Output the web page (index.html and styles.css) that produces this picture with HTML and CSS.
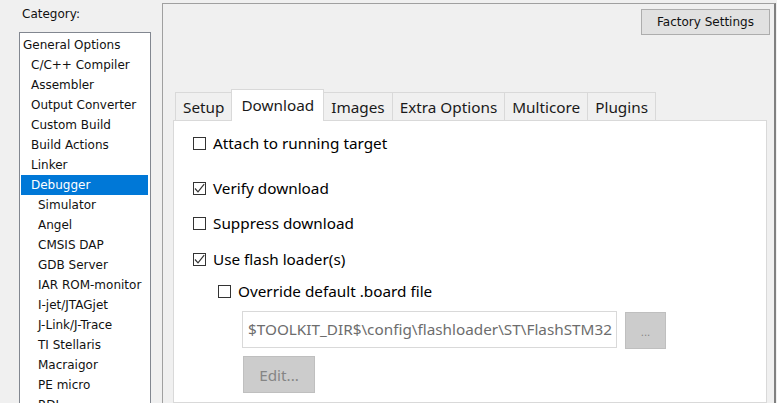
FILE: index.html
```html
<!DOCTYPE html>
<html>
<head>
<meta charset="utf-8">
<link rel="stylesheet" href="styles.css">
</head>
<body>
<div class="sidebar">
  <div class="cat-label">Category:</div>
  <div class="list">
    <div class="item l0">General Options</div>
    <div class="item l1">C/C++ Compiler</div>
    <div class="item l1">Assembler</div>
    <div class="item l1">Output Converter</div>
    <div class="item l1">Custom Build</div>
    <div class="item l1">Build Actions</div>
    <div class="item l1">Linker</div>
    <div class="item l1 selected">Debugger</div>
    <div class="item l2">Simulator</div>
    <div class="item l2">Angel</div>
    <div class="item l2">CMSIS DAP</div>
    <div class="item l2">GDB Server</div>
    <div class="item l2">IAR ROM-monitor</div>
    <div class="item l2">I-jet/JTAGjet</div>
    <div class="item l2">J-Link/J-Trace</div>
    <div class="item l2">TI Stellaris</div>
    <div class="item l2">Macraigor</div>
    <div class="item l2">PE micro</div>
    <div class="item l2">RDI</div>
  </div>
</div>
<div class="panel">
  <div class="header">
    <button class="btn-factory">Factory Settings</button>
  </div>
  <div class="tabs">
    <div class="tab">Setup</div>
    <div class="tab active">Download</div>
    <div class="tab">Images</div>
    <div class="tab">Extra Options</div>
    <div class="tab">Multicore</div>
    <div class="tab">Plugins</div>
  </div>
  <div class="content">
    <div class="row r1"><span class="cb"></span><span>Attach to running target</span></div>
    <div class="row r2"><span class="cb"><svg viewBox="0 0 13 13" width="13" height="13"><polyline points="2,6.5 5,9.8 11.2,2.2" fill="none" stroke="#333" stroke-width="1.2"/></svg></span><span>Verify download</span></div>
    <div class="row r3"><span class="cb"></span><span>Suppress download</span></div>
    <div class="row r4"><span class="cb"><svg viewBox="0 0 13 13" width="13" height="13"><polyline points="2,6.5 5,9.8 11.2,2.2" fill="none" stroke="#333" stroke-width="1.2"/></svg></span><span>Use flash loader(s)</span></div>
    <div class="row r5 indent"><span class="cb"></span><span>Override default .board file</span></div>
    <div class="path-row">
      <div class="path-input">$TOOLKIT_DIR$\config\flashloader\ST\FlashSTM32</div>
      <button class="btn-dis btn-browse">...</button>
    </div>
    <button class="btn-dis btn-edit">Edit...</button>
  </div>
</div>
</body>
</html>
```
FILE: styles.css
```css
html, body {
  margin: 0;
  padding: 0;
}
body {
  width: 777px;
  height: 403px;
  overflow: hidden;
  background: #f0f0f0;
  display: flex;
  font-family: "DejaVu Sans", sans-serif;
  font-size: 12px;
  color: #000;
}
.sidebar {
  width: 162px;
  flex: none;
  box-sizing: border-box;
  padding: 7px 0 0 19px;
}
.cat-label {
  padding-left: 3px;
  line-height: 14px;
  height: 14px;
  color: #111;
}
.list {
  margin-top: 11px;
  width: 132px;
  box-sizing: border-box;
  height: 400px;
  border: 1px solid #828790;
  background: #fff;
  padding: 2px 2px 0 1px;
}
.item {
  height: 20px;
  line-height: 20px;
  white-space: nowrap;
  color: #111;
}
.l0 { padding-left: 2px; }
.l1 { padding-left: 10px; }
.l2 { padding-left: 17px; }
.item.selected {
  background: #0078d7;
  color: #fff;
}
.panel {
  flex: 1;
  margin-top: 3px;
  margin-right: 1px;
  border-top: 1px solid #a0a0a0;
  border-left: 1px solid #a0a0a0;
  border-right: 2px solid #808080;
  padding: 5px 4px 0 10px;
  display: flex;
  flex-direction: column;
  min-width: 0;
}
.header {
  display: flex;
  justify-content: flex-end;
}
.btn-factory {
  width: 129px;
  height: 26px;
  margin: 0;
  background: #e1e1e1;
  border: 1px solid #adadad;
  font-family: "DejaVu Sans", sans-serif;
  font-size: 12px;
  color: #111;
  padding: 0;
}
.tabs {
  margin-top: 54px;
  height: 31px;
  display: flex;
  align-items: flex-end;
  padding-left: 2px;
  font-family: "Noto Sans", sans-serif;
  font-size: 15.3px;
  color: #1a1a1a;
}
.tab {
  height: 28px;
  box-sizing: border-box;
  padding: 0 7px;
  border: 1px solid #d9d9d9;
  border-bottom: none;
  margin-left: -1px;
  background: #f0f0f0;
  display: flex;
  align-items: center;
  white-space: nowrap;
}
.tab:first-child { margin-left: 0; }
.tab.active {
  height: 32px;
  margin-bottom: -1px;
  padding: 0 9px 2px;
  background: #fff;
  position: relative;
  z-index: 1;
}
.content {
  flex: 1;
  margin-right: 3px;
  background: #fff;
  border: 1px solid #d9d9d9;
  padding: 11px 0 0 19px;
  font-family: "Noto Sans", sans-serif;
  font-size: 15.3px;
  color: #000;
}
.row {
  height: 22px;
  display: flex;
  align-items: center;
  white-space: nowrap;
}
.r2 { margin-top: 23px; }
.r3 { margin-top: 13px; }
.r4 { margin-top: 14px; }
.r5 { margin-top: 10px; }
.indent { padding-left: 25px; }
.cb {
  width: 13px;
  height: 13px;
  box-sizing: border-box;
  border: 1px solid #333;
  background: #fff;
  margin-right: 7px;
  flex: none;
  position: relative;
}
.cb svg {
  position: absolute;
  left: -1px;
  top: -1px;
}
.path-row {
  margin-top: 9px;
  padding-left: 49px;
  display: flex;
  align-items: flex-start;
}
.path-input {
  width: 375px;
  height: 37px;
  box-sizing: border-box;
  border: 1px solid #d9d9d9;
  background: #fff;
  padding-left: 5px;
  line-height: 35px;
  color: #6d6d6d;
  overflow: hidden;
  white-space: nowrap;
}
.btn-dis {
  background: #cccccc;
  border: 1px solid #bfbfbf;
  color: #858585;
  padding: 0;
  margin: 0;
}
.btn-browse {
  margin-left: 8px;
  margin-top: 1px;
  width: 41px;
  height: 37px;
  font-family: "DejaVu Sans", sans-serif;
  font-size: 10px;
  padding-top: 4px;
}
.btn-edit {
  display: block;
  margin-top: 7px;
  margin-left: 50px;
  width: 72px;
  height: 37px;
  font-family: "Noto Sans", sans-serif;
  font-size: 15.3px;
}
```
